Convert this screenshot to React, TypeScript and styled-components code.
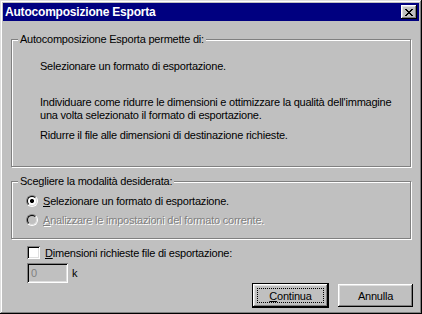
import styled, { createGlobalStyle } from "styled-components";

const GlobalStyle = createGlobalStyle`
  html, body {
    margin: 0;
    padding: 0;
    background: #c0c0c0;
  }
  body {
    font-family: "Liberation Sans", Arial, sans-serif;
    font-size: 11px;
    letter-spacing: -0.22px;
    color: #000;
  }
`;

const Window = styled.div`
  box-sizing: border-box;
  width: 422px;
  height: 314px;
  padding: 3px;
  background: #c0c0c0;
  box-shadow: inset -1px -1px #000, inset 1px 1px #dfdfdf,
    inset -2px -2px #808080, inset 2px 2px #fff;
  display: flex;
  flex-direction: column;
`;

const TitleBar = styled.div`
  height: 18px;
  background: #000080;
  color: #fff;
  display: flex;
  align-items: center;
  justify-content: space-between;
  padding: 0 2px;
`;

const Title = styled.span`
  font-weight: bold;
  font-size: 12px;
  letter-spacing: -0.2px;
`;

const CloseButton = styled.div`
  width: 16px;
  height: 14px;
  background: #c0c0c0;
  box-shadow: inset -1px -1px #000, inset 1px 1px #fff,
    inset -2px -2px #808080, inset 2px 2px #dfdfdf;
  display: flex;
  align-items: center;
  justify-content: center;
`;

const Body = styled.div`
  flex: 1;
  display: flex;
  flex-direction: column;
  padding: 12px 8px 0 8px;
`;

const Group = styled.fieldset<{ $top?: number }>`
  margin: ${(p) => p.$top ?? 0}px 0 0 0;
  padding: 0;
  border: 1px solid #808080;
  box-shadow: 1px 1px 0 #fff, inset 1px 1px 0 #fff;
  min-inline-size: 0;
`;

const Legend = styled.legend`
  margin-left: 6px;
  padding: 0 2px;
  line-height: 13px;
  background: #c0c0c0;
`;

const GroupContent = styled.div<{ $pad: string }>`
  padding: ${(p) => p.$pad};
`;

const Line = styled.div<{ $gap?: number }>`
  line-height: 13px;
  margin-top: ${(p) => p.$gap ?? 0}px;
  white-space: nowrap;
`;

const OptionRow = styled.div<{ $gap: number; $disabled?: boolean }>`
  display: flex;
  align-items: center;
  height: 13px;
  margin-top: ${(p) => p.$gap}px;
  gap: 5px;
  color: ${(p) => (p.$disabled ? "#808080" : "#000")};
  text-shadow: ${(p) => (p.$disabled ? "1px 1px 0 #fff" : "none")};
`;

const Radio = styled.span<{ $checked?: boolean; $disabled?: boolean }>`
  box-sizing: border-box;
  width: 12px;
  height: 12px;
  border-radius: 50%;
  border: 1px solid;
  border-color: #808080 #fff #fff #808080;
  display: flex;
  align-items: center;
  justify-content: center;
  flex: none;

  &::before {
    content: "";
    box-sizing: border-box;
    width: 10px;
    height: 10px;
    border-radius: 50%;
    border: 1px solid;
    border-color: #000 #dfdfdf #dfdfdf #000;
    background: ${(p) => (p.$disabled ? "#c0c0c0" : "#fff")};
    background-image: ${(p) =>
      p.$checked
        ? "radial-gradient(circle, #000 0 2px, transparent 2.2px)"
        : "none"};
  }
`;

const Footer = styled.div`
  flex: 1;
  display: flex;
  flex-direction: column;
  padding-left: 16px;
`;

const CheckRow = styled.div`
  display: flex;
  align-items: center;
  gap: 5px;
  margin-top: 7px;
  height: 13px;
`;

const Checkbox = styled.span`
  box-sizing: border-box;
  width: 13px;
  height: 13px;
  background: #fff;
  box-shadow: inset 1px 1px #808080, inset -1px -1px #fff,
    inset 2px 2px #000, inset -2px -2px #dfdfdf;
  flex: none;
`;

const SizeRow = styled.div`
  display: flex;
  align-items: center;
  gap: 4px;
  margin-top: 4px;
`;

const SizeField = styled.div`
  box-sizing: border-box;
  width: 41px;
  height: 20px;
  padding: 3px 4px;
  line-height: 14px;
  color: #808080;
  background: #c0c0c0;
  box-shadow: inset 1px 1px #808080, inset -1px -1px #fff,
    inset 2px 2px #000, inset -2px -2px #dfdfdf;
`;

const ButtonRow = styled.div`
  display: flex;
  justify-content: flex-end;
  gap: 10px;
  margin-top: 1px;
  margin-right: -2px;
`;

const Button = styled.div<{ $default?: boolean }>`
  box-sizing: border-box;
  width: 75px;
  height: 23px;
  display: flex;
  align-items: center;
  justify-content: center;
  background: #c0c0c0;
  box-shadow: ${(p) =>
    p.$default
      ? "0 0 0 1px #000, inset -1px -1px #000, inset 1px 1px #fff, inset -2px -2px #808080, inset 2px 2px #dfdfdf"
      : "inset -1px -1px #000, inset 1px 1px #fff, inset -2px -2px #808080, inset 2px 2px #dfdfdf"};
`;

const FocusRing = styled.span`
  box-sizing: border-box;
  width: 67px;
  height: 15px;
  border: 1px dotted #000;
  display: flex;
  align-items: center;
  justify-content: center;
`;

function CloseGlyph() {
  return (
    <svg width="8" height="7" viewBox="0 0 8 7" shapeRendering="crispEdges">
      <path
        fill="#000"
        d="M0 0h2v1H0zM6 0h2v1H6zM1 1h2v1H1zM5 1h2v1H5zM2 2h4v1H2zM3 3h2v1H3zM2 4h4v1H2zM1 5h2v1H1zM5 5h2v1H5zM0 6h2v1H0zM6 6h2v1H6z"
      />
    </svg>
  );
}

function App() {
  return (
    <>
      <GlobalStyle />
      <Window>
        <TitleBar>
          <Title>Autocomposizione Esporta</Title>
          <CloseButton>
            <CloseGlyph />
          </CloseButton>
        </TitleBar>
        <Body>
          <Group>
            <Legend>Autocomposizione Esporta permette di:</Legend>
            <GroupContent $pad="0 0 24px 28px">
              <Line $gap={14}>Selezionare un formato di esportazione.</Line>
              <Line $gap={23}>
                Individuare come ridurre le dimensioni e ottimizzare la qualità dell'immagine
              </Line>
              <Line>una volta selezionato il formato di esportazione.</Line>
              <Line $gap={7}>Ridurre il file alle dimensioni di destinazione richieste.</Line>
            </GroupContent>
          </Group>
          <Group $top={8}>
            <Legend>Scegliere la modalità desiderata:</Legend>
            <GroupContent $pad="0 0 12px 14px">
              <OptionRow $gap={6}>
                <Radio $checked />
                <span>
                  <u>S</u>elezionare un formato di esportazione.
                </span>
              </OptionRow>
              <OptionRow $gap={6} $disabled>
                <Radio $disabled />
                <span>
                  <u>A</u>nalizzare le impostazioni del formato corrente.
                </span>
              </OptionRow>
            </GroupContent>
          </Group>
          <Footer>
            <CheckRow>
              <Checkbox />
              <span>
                <u>D</u>imensioni richieste file di esportazione:
              </span>
            </CheckRow>
            <SizeRow>
              <SizeField>0</SizeField>
              <span>k</span>
            </SizeRow>
            <ButtonRow>
              <Button $default>
                <FocusRing>
                  <span>
                    <u>C</u>ontinua
                  </span>
                </FocusRing>
              </Button>
              <Button>Annulla</Button>
            </ButtonRow>
          </Footer>
        </Body>
      </Window>
    </>
  );
}

export default App;
